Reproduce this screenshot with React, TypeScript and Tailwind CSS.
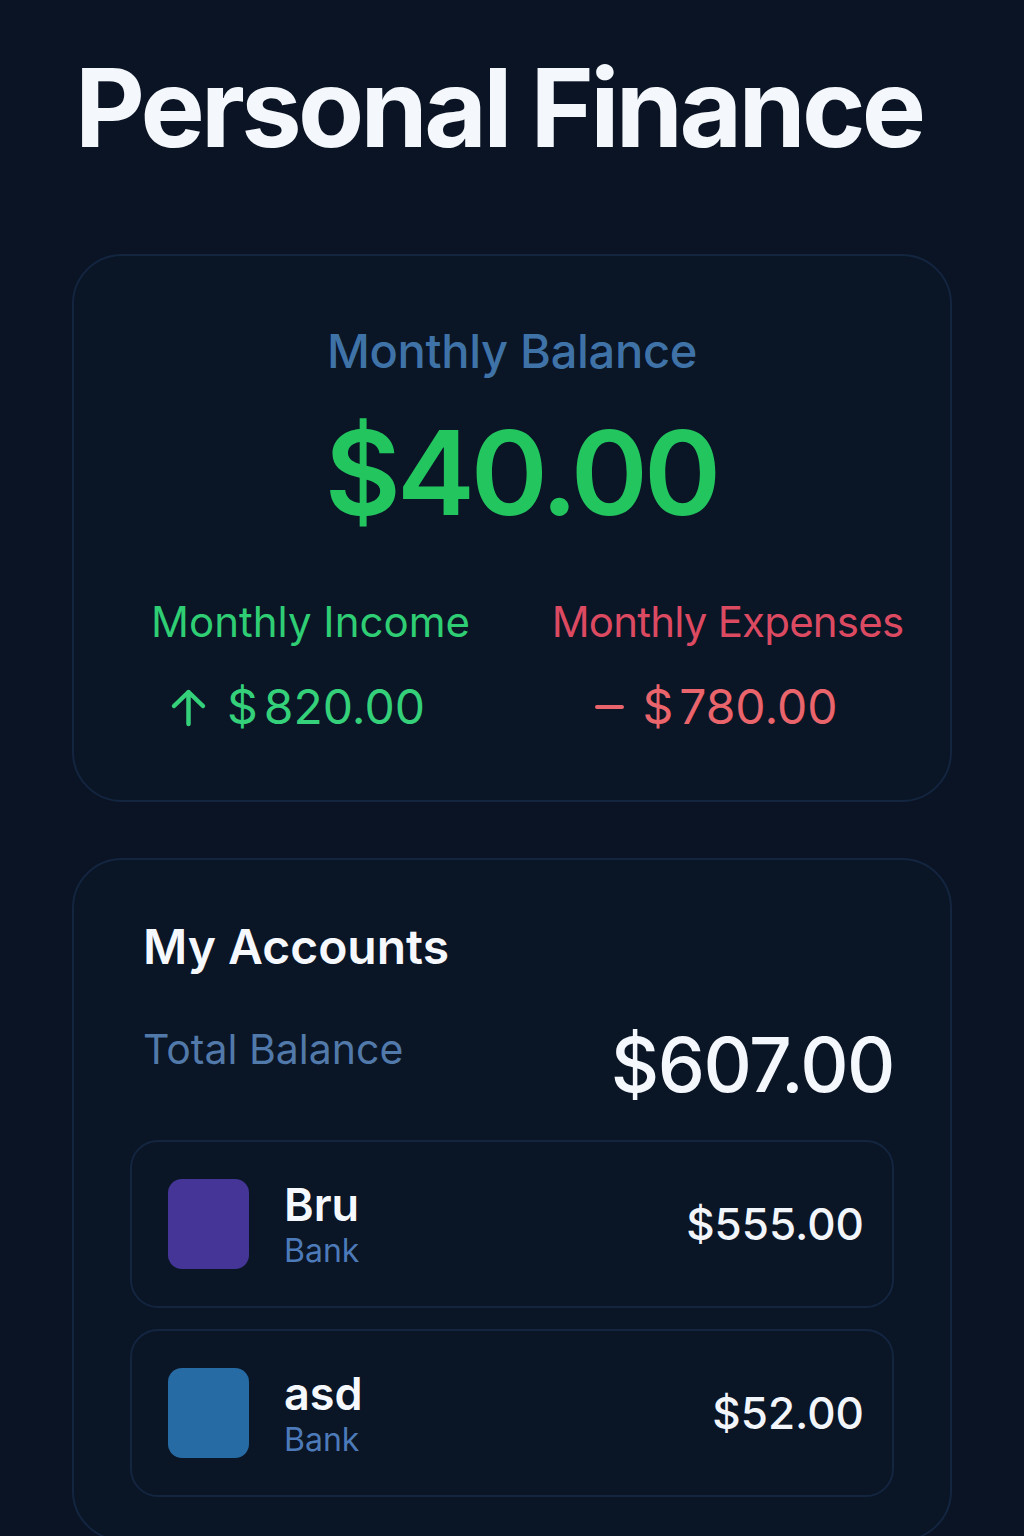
import React from "react";

const font = { fontFamily: "Inter, 'Noto Sans', 'Liberation Sans', sans-serif" };

function AccountRow({ name, amount, color }: { name: string; amount: string; color: string }) {
  return (
    <div className="flex items-center rounded-[28px] border-2 border-[#142540] bg-[#0a1526] pl-[36px] pr-[28px] py-[37px]">
      <div className={`h-[90px] w-[81px] rounded-[14px] ${color}`} />
      <div className="ml-[35px] flex flex-col">
        <div className="text-[45px] font-semibold leading-none text-[#f5f8fc]">{name}</div>
        <div className="mt-[8px] text-[32px] leading-none text-[#4d7ab8]">Bank</div>
      </div>
      <div className="ml-auto text-[44px] font-medium leading-none text-[#f2f6fb]">{amount}</div>
    </div>
  );
}

export default function App() {
  return (
    <div className="min-h-[1536px] bg-[#0a1424] px-[72px] pt-[54px]" style={font}>
      <h1 className="whitespace-nowrap pl-[3px] text-[108px] font-bold leading-none tracking-[-3.7px] text-[#f4f7fb]">
        Personal Finance
      </h1>

      <div className="mt-[92px] rounded-[50px] border-2 border-[#142540] bg-[#0a1526] pl-[28px] pr-[14px] pt-[71px] pb-[69px]">
        <div className="pr-[14px] text-center text-[47px] font-medium leading-none tracking-[-0.3px] text-[#3f73a8]">
          Monthly Balance
        </div>
        <div className="mt-[40px] pl-[4px] text-center text-[117px] font-semibold leading-none tracking-[-4px] text-[#22c55e]">
          $40.00
        </div>
        <div className="mt-[70px] grid grid-cols-2">
          <div className="flex flex-col items-center">
            <div className="text-[42px] leading-none text-[#2fce74]">Monthly Income</div>
            <div className="mt-[40px] flex items-center pr-[26px] text-[48px] leading-none text-[#34d07a]">
              <svg width="37" height="39" viewBox="0 0 37 39" className="mr-[20px]">
                <path d="M18.5 4 V36 M4 18 L18.5 4 L33 18" fill="none" stroke="#34d07a" strokeWidth="4.5" strokeLinecap="round" strokeLinejoin="round" />
              </svg>
              <span className="mr-[6px]">$</span>
              <span>820.00</span>
            </div>
          </div>
          <div className="flex flex-col items-center">
            <div className="text-[42px] leading-none tracking-[-0.8px] text-[#dc4a62]">Monthly Expenses</div>
            <div className="mt-[40px] flex items-center pr-[22px] text-[48px] leading-none text-[#e9646b]">
              <div className="mr-[18px] h-[4px] w-[29px] rounded-full bg-[#e9646b]" />
              <span className="mr-[6px]">$</span>
              <span>780.00</span>
            </div>
          </div>
        </div>
      </div>

      <div className="mt-[56px] rounded-[50px] border-2 border-[#142540] bg-[#0a1526] px-[56px] pt-[63px] pb-[42px]">
        <div className="pl-[13px] text-[48px] font-semibold leading-none text-[#f5f8fc]">My Accounts</div>
        <div className="mt-[56px] flex items-start justify-between pl-[13px]">
          <div className="mt-[2px] text-[41px] leading-none text-[#5179a9]">Total Balance</div>
          <div className="text-[75px] font-medium leading-none tracking-[-1.5px] text-[#f4f7fb]">$607.00</div>
        </div>
        <div className="mt-[38px] flex flex-col gap-[21px]">
          <AccountRow name="Bru" amount="$555.00" color="bg-[#443597]" />
          <AccountRow name="asd" amount="$52.00" color="bg-[#266ba3]" />
        </div>
      </div>
    </div>
  );
}
